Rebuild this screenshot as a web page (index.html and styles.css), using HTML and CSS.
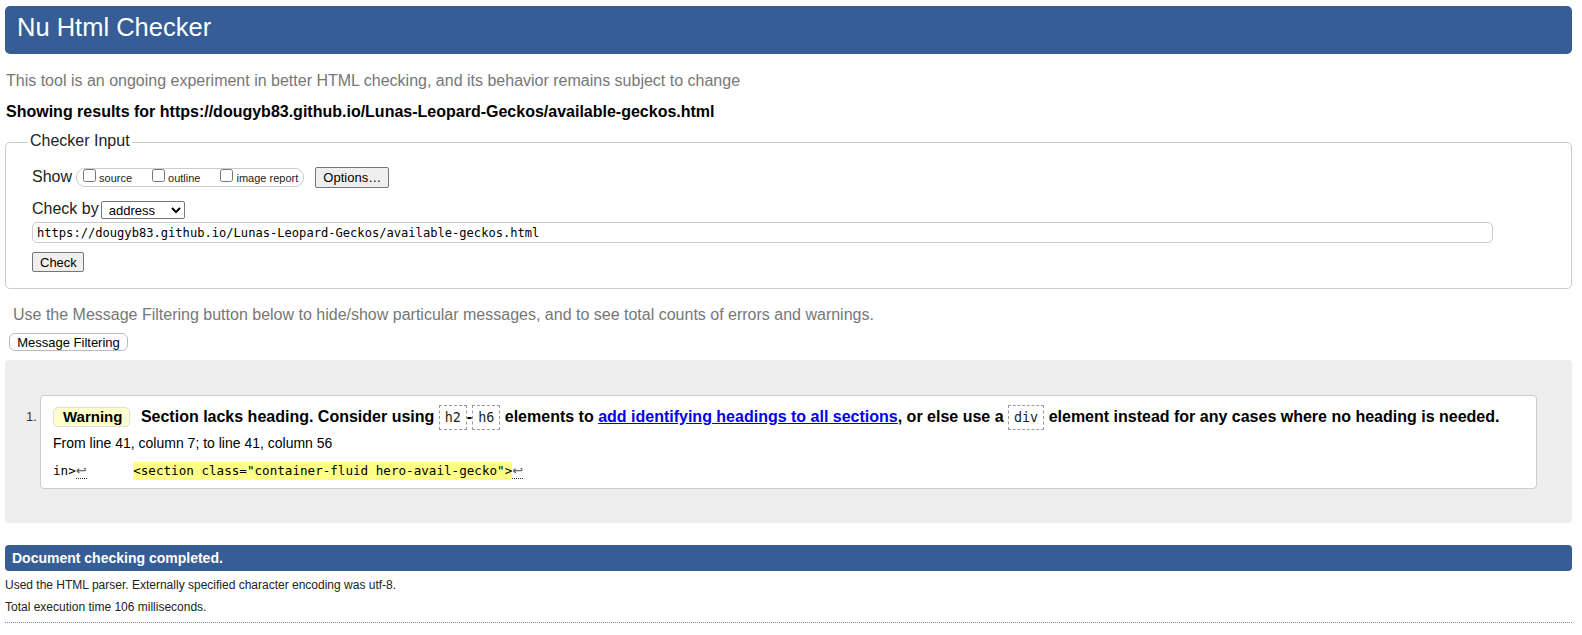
FILE: index.html
```html
<!DOCTYPE html>
<html lang="en">
<head>
<meta charset="utf-8">
<title>Showing results for https://dougyb83.github.io/Lunas-Leopard-Geckos/available-geckos.html - Nu Html Checker</title>
<link rel="stylesheet" href="styles.css">
</head>
<body>
<div class="page">
  <h1 class="header">Nu Html Checker</h1>
  <p class="tagline">This tool is an ongoing experiment in better HTML checking, and its behavior remains subject to change</p>
  <p class="showing">Showing results for https://dougyb83.github.io/Lunas-Leopard-Geckos/available-geckos.html</p>

  <fieldset class="input">
    <legend class="legend">Checker Input</legend>
    <div class="row show-row">
      <span class="lbl">Show</span>
      <span class="showbox">
        <label class="opt"><input type="checkbox" class="cb">source</label>
        <label class="opt"><input type="checkbox" class="cb">outline</label>
        <label class="opt last"><input type="checkbox" class="cb">image report</label>
      </span>
      <button class="btn options">Options…</button>
    </div>
    <div class="row by-row">
      <span class="lbl">Check by</span>
      <select class="sel"><option>address</option></select>
    </div>
    <input class="url" type="text" value="https://dougyb83.github.io/Lunas-Leopard-Geckos/available-geckos.html">
    <div class="check-row"><button class="btn check">Check</button></div>
  </fieldset>

  <p class="filter-note">Use the Message Filtering button below to hide/show particular messages, and to see total counts of errors and warnings.</p>
  <button class="filter-btn">Message Filtering</button>

  <div class="results">
    <div class="msg-row">
      <span class="num">1.</span>
      <div class="msg">
        <p class="msg-text"><span class="badge">Warning</span> <span class="txt">Section lacks heading. Consider using <code class="c">h2</code>-<code class="c">h6</code> elements to <a class="lnk" href="#">add identifying headings to all sections</a>, or else use a <code class="c">div</code> element instead for any cases where no heading is needed.</span></p>
        <p class="loc">From line 41, column 7; to line 41, column 56</p>
        <p class="extract"><code class="ex">in&gt;<b class="lf">↩</b>      <mark class="hl">&lt;section class="container-fluid hero-avail-gecko"&gt;</mark><b class="lf">↩</b></code></p>
      </div>
    </div>
  </div>

  <p class="done">Document checking completed.</p>
  <p class="info first">Used the HTML parser. Externally specified character encoding was utf-8.</p>
  <p class="info">Total execution time 106 milliseconds.</p>
  <hr class="dots">
</div>
</body>
</html>
```

FILE: styles.css
```css
html, body {
  margin: 0;
  padding: 0;
  background: #fff;
}
body {
  font-family: "Liberation Sans", Arial, sans-serif;
  color: #000;
}
.page {
  padding: 6px 10px 0 5px;
}
p { margin: 0; }

.header {
  margin: 0;
  height: 48px;
  line-height: 43px;
  padding-left: 12px;
  font-size: 25.5px;
  font-weight: normal;
  color: #fff;
  background: #365d95;
  border-radius: 5px;
}

.tagline {
  margin-top: 16.5px;
  padding-left: 1px;
  font-size: 16px;
  line-height: 20px;
  color: #777;
}
.showing {
  margin-top: 11px;
  padding-left: 1px;
  font-size: 16px;
  line-height: 20px;
  font-weight: bold;
}

.input {
  margin: 10px 0 0;
  border: 1px solid #ccc;
  border-radius: 5px;
  padding: 14.5px 26px 16px 26px;
  min-width: 0;
}
.legend {
  margin-left: -4px;
  padding: 0 2px 3px;
  font-size: 16px;
  line-height: 18px;
  color: #222;
}
.row {
  display: flex;
  align-items: flex-start;
}
.lbl {
  font-size: 16px;
  line-height: 20px;
  color: #222;
}
.showbox {
  display: flex;
  margin: 1px 0 0 4px;
  height: 17px;
  padding: 0 5px 0 2px;
  border: 1px solid #ccc;
  border-radius: 9px;
}
.opt {
  display: block;
  font-size: 11px;
  line-height: 13px;
  margin-right: 16px;
  color: #222;
}
.opt.last { margin-right: 0; }
.cb {
  width: 13px;
  height: 13px;
  margin: 0 3px 0 4px;
  vertical-align: baseline;
}
.btn {
  font-family: "Liberation Sans", Arial, sans-serif;
  font-size: 13px;
  color: #000;
  background: #efefef;
  border: 1px solid #767676;
  border-radius: 2px;
  padding: 0 7px;
}
.options {
  margin-left: 11px;
  height: 21px;
  width: 74px;
}
.by-row {
  margin-top: 11px;
}
.sel {
  margin: 2px 0 0 2px;
  width: 84px;
  height: 18px;
  font-family: "Liberation Sans", Arial, sans-serif;
  font-size: 13px;
  padding: 0 0 0 3px;
  border: 1px solid #767676;
  border-radius: 2px;
  background: #fff;
  color: #000;
}
.url {
  display: block;
  box-sizing: border-box;
  margin-top: 3px;
  width: 1461px;
  height: 21px;
  padding: 0 4px;
  border: 1px solid #ccc;
  border-radius: 5px;
  font-family: "DejaVu Sans Mono", monospace;
  font-size: 12.1px;
  color: #000;
}
.check-row {
  margin-top: 9px;
  display: flex;
}
.check {
  height: 20px;
  width: 52px;
}

.filter-note {
  margin-top: 15.5px;
  padding-left: 8px;
  font-size: 16px;
  line-height: 20px;
  color: #777;
}
.filter-btn {
  display: block;
  margin: 8.5px 0 0 4px;
  height: 18px;
  width: 119px;
  padding: 0;
  font-family: "Liberation Sans", Arial, sans-serif;
  font-size: 13px;
  color: #000;
  background: #fff;
  border: 1px solid #bbb;
  border-radius: 6px;
}

.results {
  margin-top: 9px;
  background: #eee;
  border-radius: 4px;
  padding: 35px 35px 34px 21px;
}
.msg-row {
  display: flex;
  align-items: flex-start;
}
.num {
  flex: 0 0 14px;
  padding-top: 9px;
  font-size: 13px;
  line-height: 25px;
  color: #333;
}
.msg {
  flex: 1 1 auto;
  box-sizing: border-box;
  height: 94px;
  background: #fff;
  border: 1px solid #ccc;
  border-radius: 4px;
  padding: 8px 12px 0 12px;
}
.msg-text {
  height: 25px;
  font-size: 16px;
  line-height: 25px;
  font-weight: bold;
  white-space: nowrap;
}
.badge {
  display: inline-block;
  font-size: 15px;
  line-height: 18px;
  padding: 0 7px 0 9px;
  background: #ffc;
  border: 1px solid #ddd;
  border-radius: 5px;
  margin-right: 6px;
}
.c {
  display: inline-block;
  font-family: "DejaVu Sans Mono", monospace;
  font-size: 13.4px;
  font-weight: normal;
  line-height: 23px;
  padding: 0 5px;
  border: 1px dashed #999;
  color: #222;
}
.lnk {
  color: #00e;
  text-decoration: underline;
}
.loc {
  margin-top: 4px;
  height: 20px;
  font-size: 14px;
  line-height: 20px;
  color: #000;
}
.extract {
  margin-top: 6.5px;
  height: 20px;
  line-height: 20px;
}
.ex {
  font-family: "DejaVu Sans Mono", monospace;
  font-size: 12.6px;
  white-space: pre;
  color: #000;
}
.lf {
  font-family: "DejaVu Sans", sans-serif;
  font-size: 13px;
  font-weight: normal;
  color: #555;
  border-bottom: 1px dotted #333;
  margin-right: 1px;
}
.hl {
  background: #ff8;
  color: #000;
  padding: 1px 0 2px;
}

.done {
  margin-top: 22px;
  height: 26px;
  line-height: 26px;
  padding-left: 7px;
  background: #365d95;
  color: #fff;
  font-size: 14px;
  font-weight: bold;
  border-radius: 4px;
}
.info {
  margin-top: 6px;
  font-size: 12px;
  line-height: 16px;
  color: #222;
}
.info.first { margin-top: 6px; }
.dots {
  margin: 7px 0 0;
  border: 0;
  border-top: 1px dotted #888;
  height: 0;
}
```
